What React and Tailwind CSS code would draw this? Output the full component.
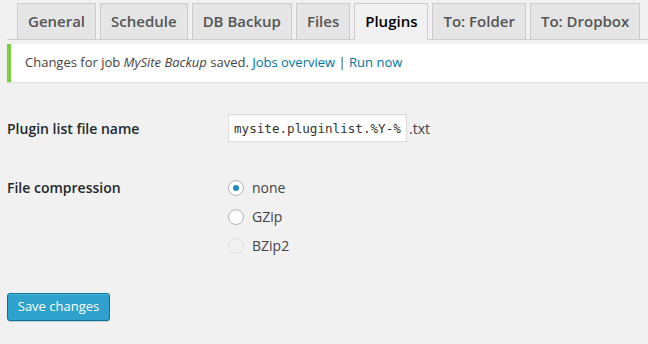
import React, { useState } from 'react';

const tabs = ['General', 'Schedule', 'DB Backup', 'Files', 'Plugins', 'To: Folder', 'To: Dropbox'];

function Radio({ checked, disabled, label, onChange }) {
  return (
    <label className="flex items-center h-[29px] gap-[8px] cursor-pointer">
      <span
        onClick={disabled ? undefined : onChange}
        className={
          disabled
            ? 'w-4 h-4 rounded-full border border-[#e2e4e6] bg-[#f1f1f1] flex items-center justify-center'
            : 'w-4 h-4 rounded-full border border-[#b4b9be] bg-white shadow-[inset_0_1px_2px_rgba(0,0,0,0.07)] flex items-center justify-center'
        }
      >
        {checked && <span className="w-[6px] h-[6px] rounded-full bg-[#1e8cbe]" />}
      </span>
      <span className="text-[14px] text-[#444]">{label}</span>
    </label>
  );
}

export default function App() {
  const [compression, setCompression] = useState('none');

  return (
    <div className="w-[648px] h-[344px] bg-[#f1f1f1] overflow-hidden font-['Open_Sans',sans-serif] text-[#444]">
      {/* tabs */}
      <div className="ml-[7px] pt-[3px] pl-[10px] flex gap-[4px] border-b border-[#ccc]">
        {tabs.map((t) => (
          <div
            key={t}
            className={
              t === 'Plugins'
                ? 'h-[37px] -mb-px px-[10px] flex items-center border border-[#ccc] border-b-[#f1f1f1] bg-[#f1f1f1] text-[15px] font-semibold text-black whitespace-nowrap'
                : 'h-[37px] -mb-px px-[10px] flex items-center border border-[#ccc] bg-[#e5e5e5] text-[15px] font-semibold text-[#555] whitespace-nowrap'
            }
          >
            {t}
          </div>
        ))}
      </div>

      {/* notice */}
      <div className="ml-[7px] mt-[4px] h-[38px] bg-white border-l-4 border-[#7ad03a] shadow-[0_1px_1px_rgba(0,0,0,0.08)] flex items-center px-[14px] text-[13px] text-[#444]">
        <p>
          Changes for job <em>MySite Backup</em> saved.{' '}
          <a href="#" className="text-[#0074a2]">Jobs overview</a>{' '}
          <span className="text-[#444]">|</span>{' '}
          <a href="#" className="text-[#0074a2]">Run now</a>
        </p>
      </div>

      {/* form */}
      <div className="pl-[7px]">
        <div className="flex items-center mt-[32px]">
          <div className="w-[221px] text-[14px] font-semibold text-[#23282d]">Plugin list file name</div>
          <input
            type="text"
            defaultValue="mysite.pluginlist.%Y-%m-%d"
            className="w-[179px] h-[28px] px-[5px] bg-white border border-[#ddd] shadow-[inset_0_1px_2px_rgba(0,0,0,0.07)] font-['DejaVu_Sans_Mono',monospace] text-[12.6px] text-[#333] outline-none"
          />
          <span className="ml-[2px] text-[14px] text-[#444]">.txt</span>
        </div>

        <div className="flex items-start mt-[31px]">
          <div className="w-[221px] h-[29px] flex items-center text-[14px] font-semibold text-[#23282d]">File compression</div>
          <div className="flex flex-col">
            <Radio checked={compression === 'none'} label="none" onChange={() => setCompression('none')} />
            <Radio checked={compression === 'gz'} label="GZip" onChange={() => setCompression('gz')} />
            <Radio disabled label="BZip2" />
          </div>
        </div>

        <button
          type="button"
          className="mt-[33px] w-[103px] h-[28px] rounded-[3px] bg-[#2ea2cc] border border-[#0074a2] text-white text-[13px] shadow-[inset_0_1px_0_rgba(120,200,230,0.5),0_1px_0_rgba(0,0,0,0.15)]"
        >
          Save changes
        </button>
      </div>
    </div>
  );
}
